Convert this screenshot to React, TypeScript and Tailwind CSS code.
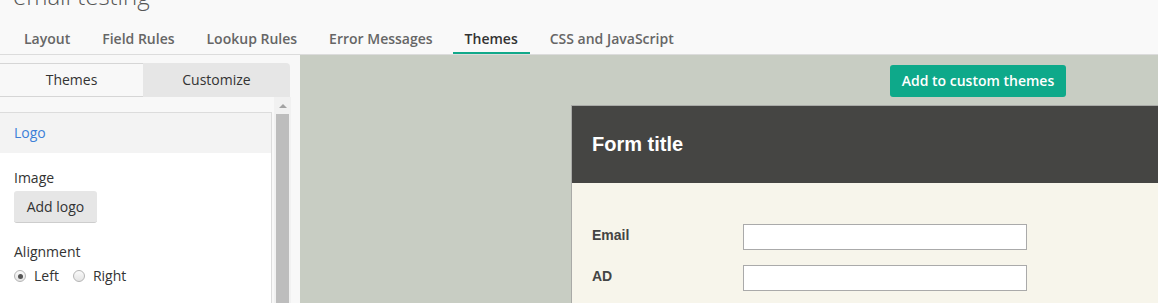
import React from 'react';

const tabs = ['Layout', 'Field Rules', 'Lookup Rules', 'Error Messages', 'Themes', 'CSS and JavaScript'];

function Radio({ checked, label }: { checked?: boolean; label: string }) {
  return (
    <label className="flex items-center gap-2 text-sm text-[#333]">
      <span className="flex h-3 w-3 items-center justify-center rounded-full border border-[#b5b5b5] bg-gradient-to-b from-[#fafafa] to-[#e4e4e4]">
        {checked && <span className="h-[5px] w-[5px] rounded-full bg-[#555]" />}
      </span>
      <span>{label}</span>
    </label>
  );
}

function SidePanel() {
  return (
    <aside className="flex w-[300px] shrink-0 flex-col bg-[#f8f8f8] pt-2">
      <div className="flex h-[34px] w-[290px] text-sm text-[#333]">
        <div className="flex w-[143px] items-center justify-center border-y border-[#d6d6d6] bg-[#f8f8f8]">Themes</div>
        <div className="flex flex-1 items-center justify-center rounded-tr-[4px] bg-[#e6e6e6]">Customize</div>
      </div>

      <div className="flex flex-1">
        <div className="w-[272px] pt-[15px]">
          <div className="h-full border-t border-r border-[#dcdcdc] bg-white">
            <div className="flex h-[40px] items-center bg-[#f3f3f3] px-[14px] text-sm text-[#3d7fd8]">Logo</div>
            <div className="px-[14px] pt-[15px] text-sm text-[#333]">
              <div className="leading-5">Image</div>
              <button className="mt-[3px] h-[32px] w-[83px] rounded-[3px] border-b border-[#cdcdcd] bg-[#e6e6e6] text-sm text-[#333]">
                Add logo
              </button>
              <div className="mt-[19px] leading-5">Alignment</div>
              <div className="mt-1 flex items-center gap-[14px] leading-5">
                <Radio checked label="Left" />
                <Radio label="Right" />
              </div>
            </div>
          </div>
        </div>

        {/* scrollbar */}
        <div className="ml-[2px] flex w-[17px] flex-col items-center bg-[#f1f1f1]">
          <div className="flex h-[17px] items-center justify-center">
            <span className="h-0 w-0 border-x-[4px] border-b-[4px] border-x-transparent border-b-[#a3a3a3]" />
          </div>
          <div className="w-[13px] flex-1 bg-[#bdbdbd]" />
        </div>
      </div>
    </aside>
  );
}

function Preview() {
  return (
    <main className="flex-1 overflow-hidden bg-[#c8cdc3] pt-[10px]">
      <button className="ml-[590px] h-[32px] w-[176px] rounded-[3px] bg-[#0ea98a] text-sm font-semibold text-white">
        Add to custom themes
      </button>

      <div className="mt-2 ml-[271px] w-[620px] border-t border-l border-[#a9aaa7]">
        <div className="flex h-[77px] items-center bg-[#454543] px-5 pb-[2px] font-['Liberation_Sans',Arial,sans-serif] text-[20px] font-bold text-white">
          Form title
        </div>
        <div className="h-[200px] bg-[#f7f5eb] px-5 pt-[41px] font-['Liberation_Sans',Arial,sans-serif] text-sm font-bold text-[#444]">
          {['Email', 'AD'].map((f, i) => (
            <div key={f} className={`flex items-start ${i > 0 ? 'mt-[15px]' : ''}`}>
              <div className="mt-[3px] w-[151px] leading-4">{f}</div>
              <input className="h-[26px] w-[284px] border border-[#aaa] bg-white" />
            </div>
          ))}
        </div>
      </div>
    </main>
  );
}

export default function App() {
  return (
    <div className="flex h-[303px] w-[1158px] flex-col overflow-hidden font-['Open_Sans',sans-serif]">
      <header className="flex h-[55px] shrink-0 flex-col overflow-hidden border-b border-[#dcdcdc] bg-[#f9f9f9]">
        <h1 className="-mt-[20px] pl-[13px] text-[24px] font-light leading-8 text-[#555]">email testing</h1>
        <nav className="mt-auto flex gap-2 pl-3 text-sm font-semibold">
          {tabs.map((t) => (
            <div
              key={t}
              className={
                t === 'Themes'
                  ? 'border-b-2 border-[#11a98a] px-3 pb-[3px] leading-5 text-[#333]'
                  : 'border-b-2 border-transparent px-3 pb-[3px] leading-5 text-[#666]'
              }
            >
              {t}
            </div>
          ))}
        </nav>
      </header>

      <div className="flex flex-1 overflow-hidden">
        <SidePanel />
        <Preview />
      </div>
    </div>
  );
}
